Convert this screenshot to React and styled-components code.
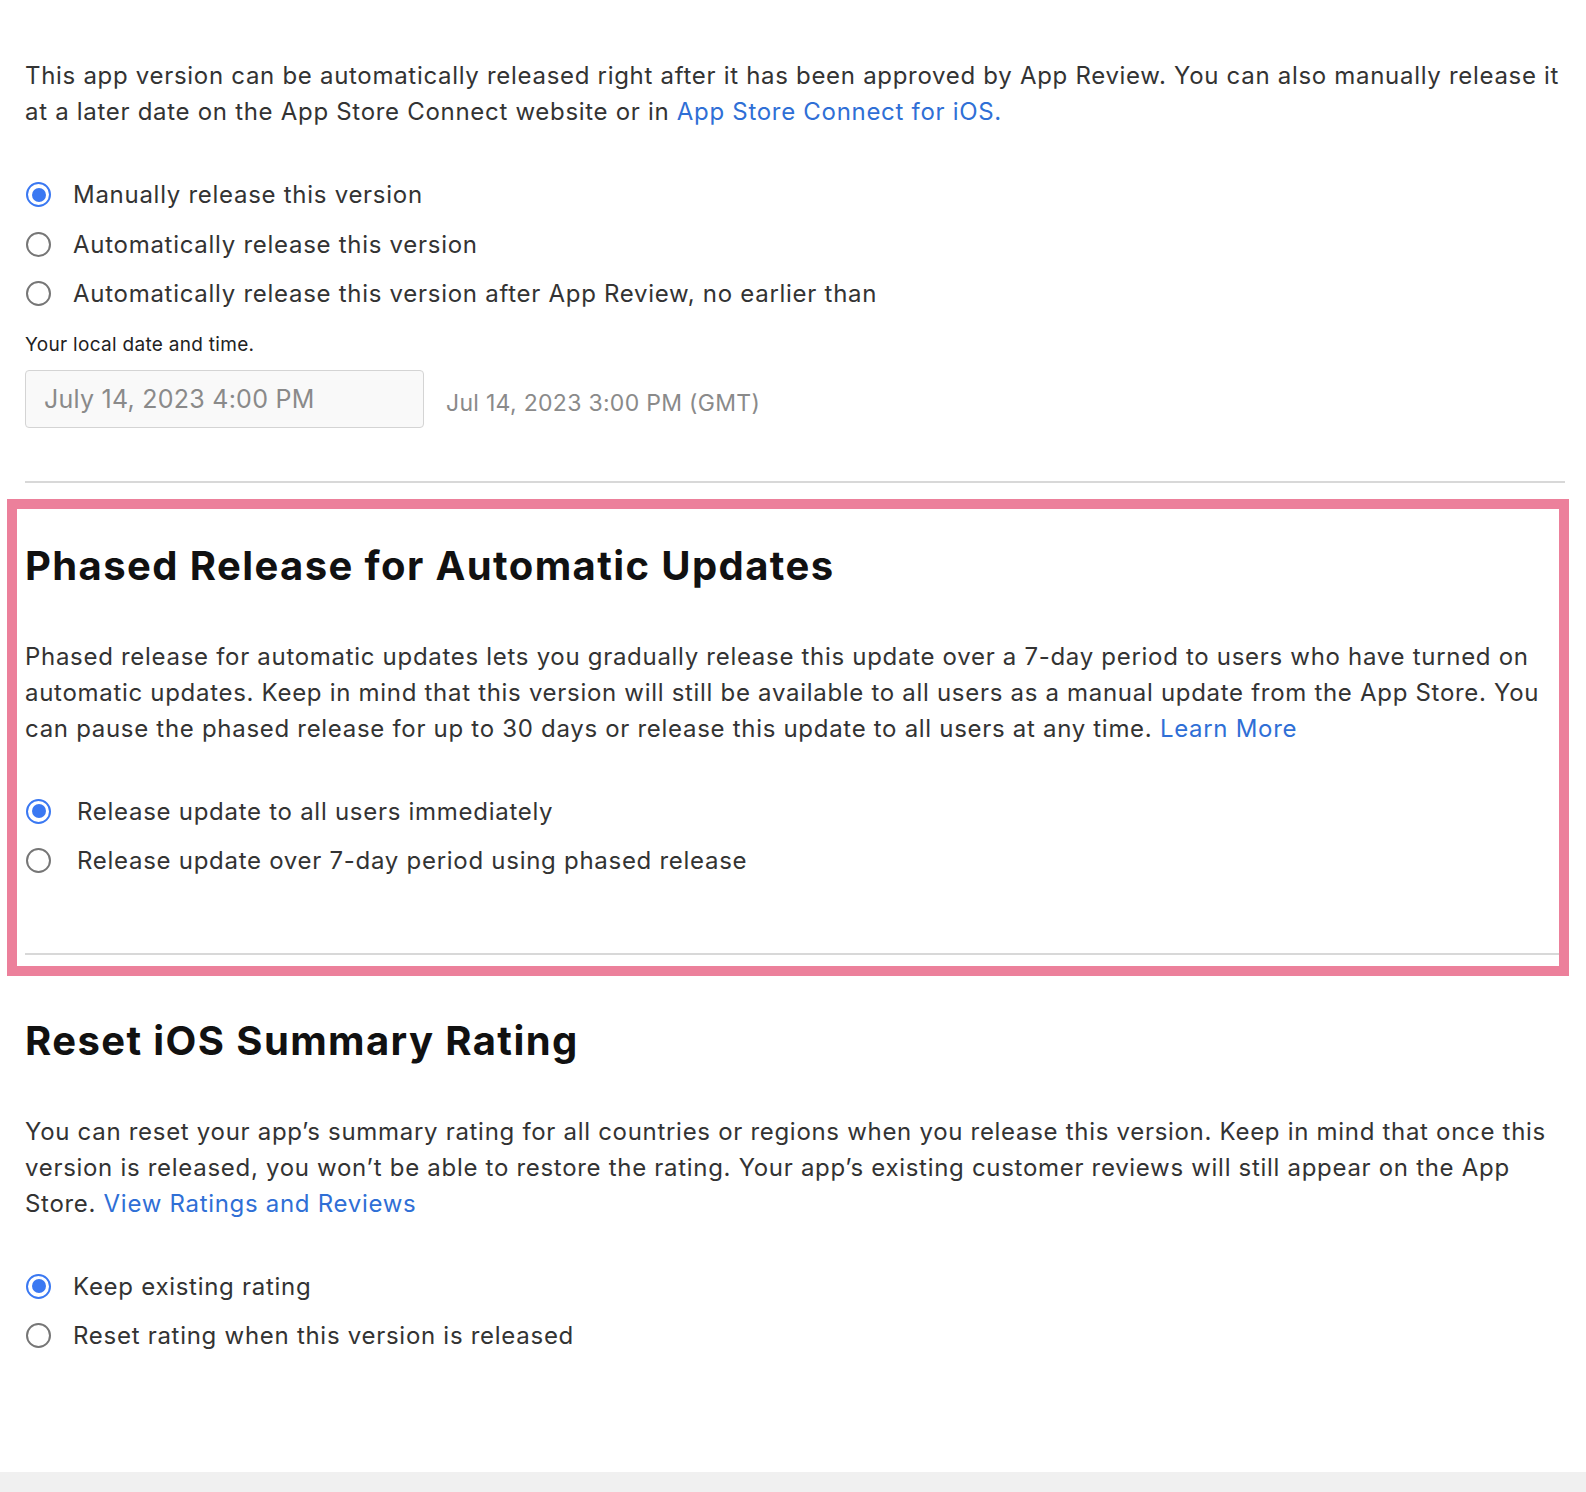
import React from 'react';
import styled, { createGlobalStyle } from 'styled-components';

const Global = createGlobalStyle`
    html, body {
        margin: 0;
        padding: 0;
        background: #ffffff;
    }
    body {
        font-family: Inter, "Noto Sans", "Liberation Sans", sans-serif;
        color: #333333;
        -webkit-font-smoothing: antialiased;
    }
`;

const Page = styled.div`
    width: 1586px;
    min-height: 1492px;
    box-sizing: border-box;
    display: flex;
    flex-direction: column;
`;

const Content = styled.div`
    box-sizing: border-box;
    padding: 58px 21px 0 25px;
    display: flex;
    flex-direction: column;
`;

const Paragraph = styled.p`
    margin: ${(p) => p.$top || 0}px 0 0 0;
    font-size: 24px;
    letter-spacing: 0.7px;
    line-height: 36px;
    color: #333333;
`;

const Link = styled.a`
    color: #2f6fd6;
    text-decoration: none;
`;

const RadioGroup = styled.div`
    display: flex;
    flex-direction: column;
    margin-top: ${(p) => p.$top}px;
`;

const RadioRow = styled.label`
    display: flex;
    align-items: center;
    height: 49.5px;
    gap: ${(p) => p.$gap}px;
    font-size: 24px;
    letter-spacing: 0.72px;
    color: #333333;
    cursor: pointer;
`;

const Circle = styled.span`
    box-sizing: border-box;
    width: 25px;
    height: 25px;
    border-radius: 50%;
    flex: none;
    margin-left: 1px;
    border: ${(p) => (p.$on ? '2.5px solid #3a78f2' : '2px solid #767676')};
    display: flex;
    align-items: center;
    justify-content: center;
    &::after {
        content: '';
        width: 14px;
        height: 14px;
        border-radius: 50%;
        background: ${(p) => (p.$on ? '#3a78f2' : 'transparent')};
    }
`;

const SmallLabel = styled.div`
    margin-top: 14px;
    font-size: 19px;
    letter-spacing: 0.3px;
    line-height: 24px;
    color: #222222;
`;

const DateRow = styled.div`
    display: flex;
    align-items: center;
    gap: 22px;
    margin-top: 13px;
`;

const DateInput = styled.div`
    box-sizing: border-box;
    width: 399px;
    height: 58px;
    border: 1.5px solid #d4d4d4;
    border-radius: 4px;
    background: #f9f9f9;
    padding-left: 18px;
    display: flex;
    align-items: center;
    font-size: 25px;
    letter-spacing: 0.25px;
    color: #8a8a8a;
`;

const Zone = styled.span`
    padding-top: 8px;
    font-size: 23px;
    letter-spacing: 0.3px;
    color: #8a8a8a;
`;

const Divider = styled.hr`
    border: none;
    height: 2px;
    background: #d8d8d8;
    margin: ${(p) => p.$top}px 0 0 0;
`;

const Highlight = styled.section`
    box-sizing: border-box;
    margin: 16px -4px 0 -18px;
    border: 10px solid #ec809b;
    padding: 37px 0 11px 8px;
    display: flex;
    flex-direction: column;
`;

const Heading = styled.h2`
    margin: ${(p) => p.$top || 0}px 0 0 0;
    font-size: 40px;
    line-height: 40px;
    font-weight: 700;
    letter-spacing: 1.4px;
    color: #111111;
`;

const Block = styled.section`
    display: flex;
    flex-direction: column;
`;

const Footer = styled.div`
    margin-top: auto;
    height: 20px;
    background: #f0f0f0;
`;

function Radio({ on, gap, children }) {
    return (
        <RadioRow $gap={gap}>
            <Circle $on={on} />
            {children}
        </RadioRow>
    );
}

export default function App() {
    return (
        <Page>
            <Global />
            <Content>
                <Paragraph>
                    This app version can be automatically released right after it has been approved by App Review. You can also manually release it at a later date on the App Store Connect website or in <Link href="#">App Store Connect for iOS.</Link>
                </Paragraph>
                <RadioGroup $top={40}>
                    <Radio on gap={22}>Manually release this version</Radio>
                    <Radio gap={22}>Automatically release this version</Radio>
                    <Radio gap={22}>Automatically release this version after App Review, no earlier than</Radio>
                </RadioGroup>
                <SmallLabel>Your local date and time.</SmallLabel>
                <DateRow>
                    <DateInput>July 14, 2023 4:00 PM</DateInput>
                    <Zone>Jul 14, 2023 3:00 PM (GMT)</Zone>
                </DateRow>
                <Divider $top={53} />

                <Highlight>
                    <Heading>Phased Release for Automatic Updates</Heading>
                    <Paragraph $top={53}>
                        Phased release for automatic updates lets you gradually release this update over a 7-day period to users who have turned on automatic updates. Keep in mind that this version will still be available to all users as a manual update from the App Store. You can pause the phased release for up to 30 days or release this update to all users at any time. <Link href="#">Learn More</Link>
                    </Paragraph>
                    <RadioGroup $top={40}>
                        <Radio on gap={26}>Release update to all users immediately</Radio>
                        <Radio gap={26}>Release update over 7-day period using phased release</Radio>
                    </RadioGroup>
                    <Divider $top={67} />
                </Highlight>

                <Block>
                    <Heading $top={45}>Reset iOS Summary Rating</Heading>
                    <Paragraph $top={53}>
                        You can reset your app’s summary rating for all countries or regions when you release this version. Keep in mind that once this version is released, you won’t be able to restore the rating. Your app’s existing customer reviews will still appear on the App Store. <Link href="#">View Ratings and Reviews</Link>
                    </Paragraph>
                    <RadioGroup $top={40}>
                        <Radio on gap={22}>Keep existing rating</Radio>
                        <Radio gap={22}>Reset rating when this version is released</Radio>
                    </RadioGroup>
                </Block>
            </Content>
            <Footer />
        </Page>
    );
}
